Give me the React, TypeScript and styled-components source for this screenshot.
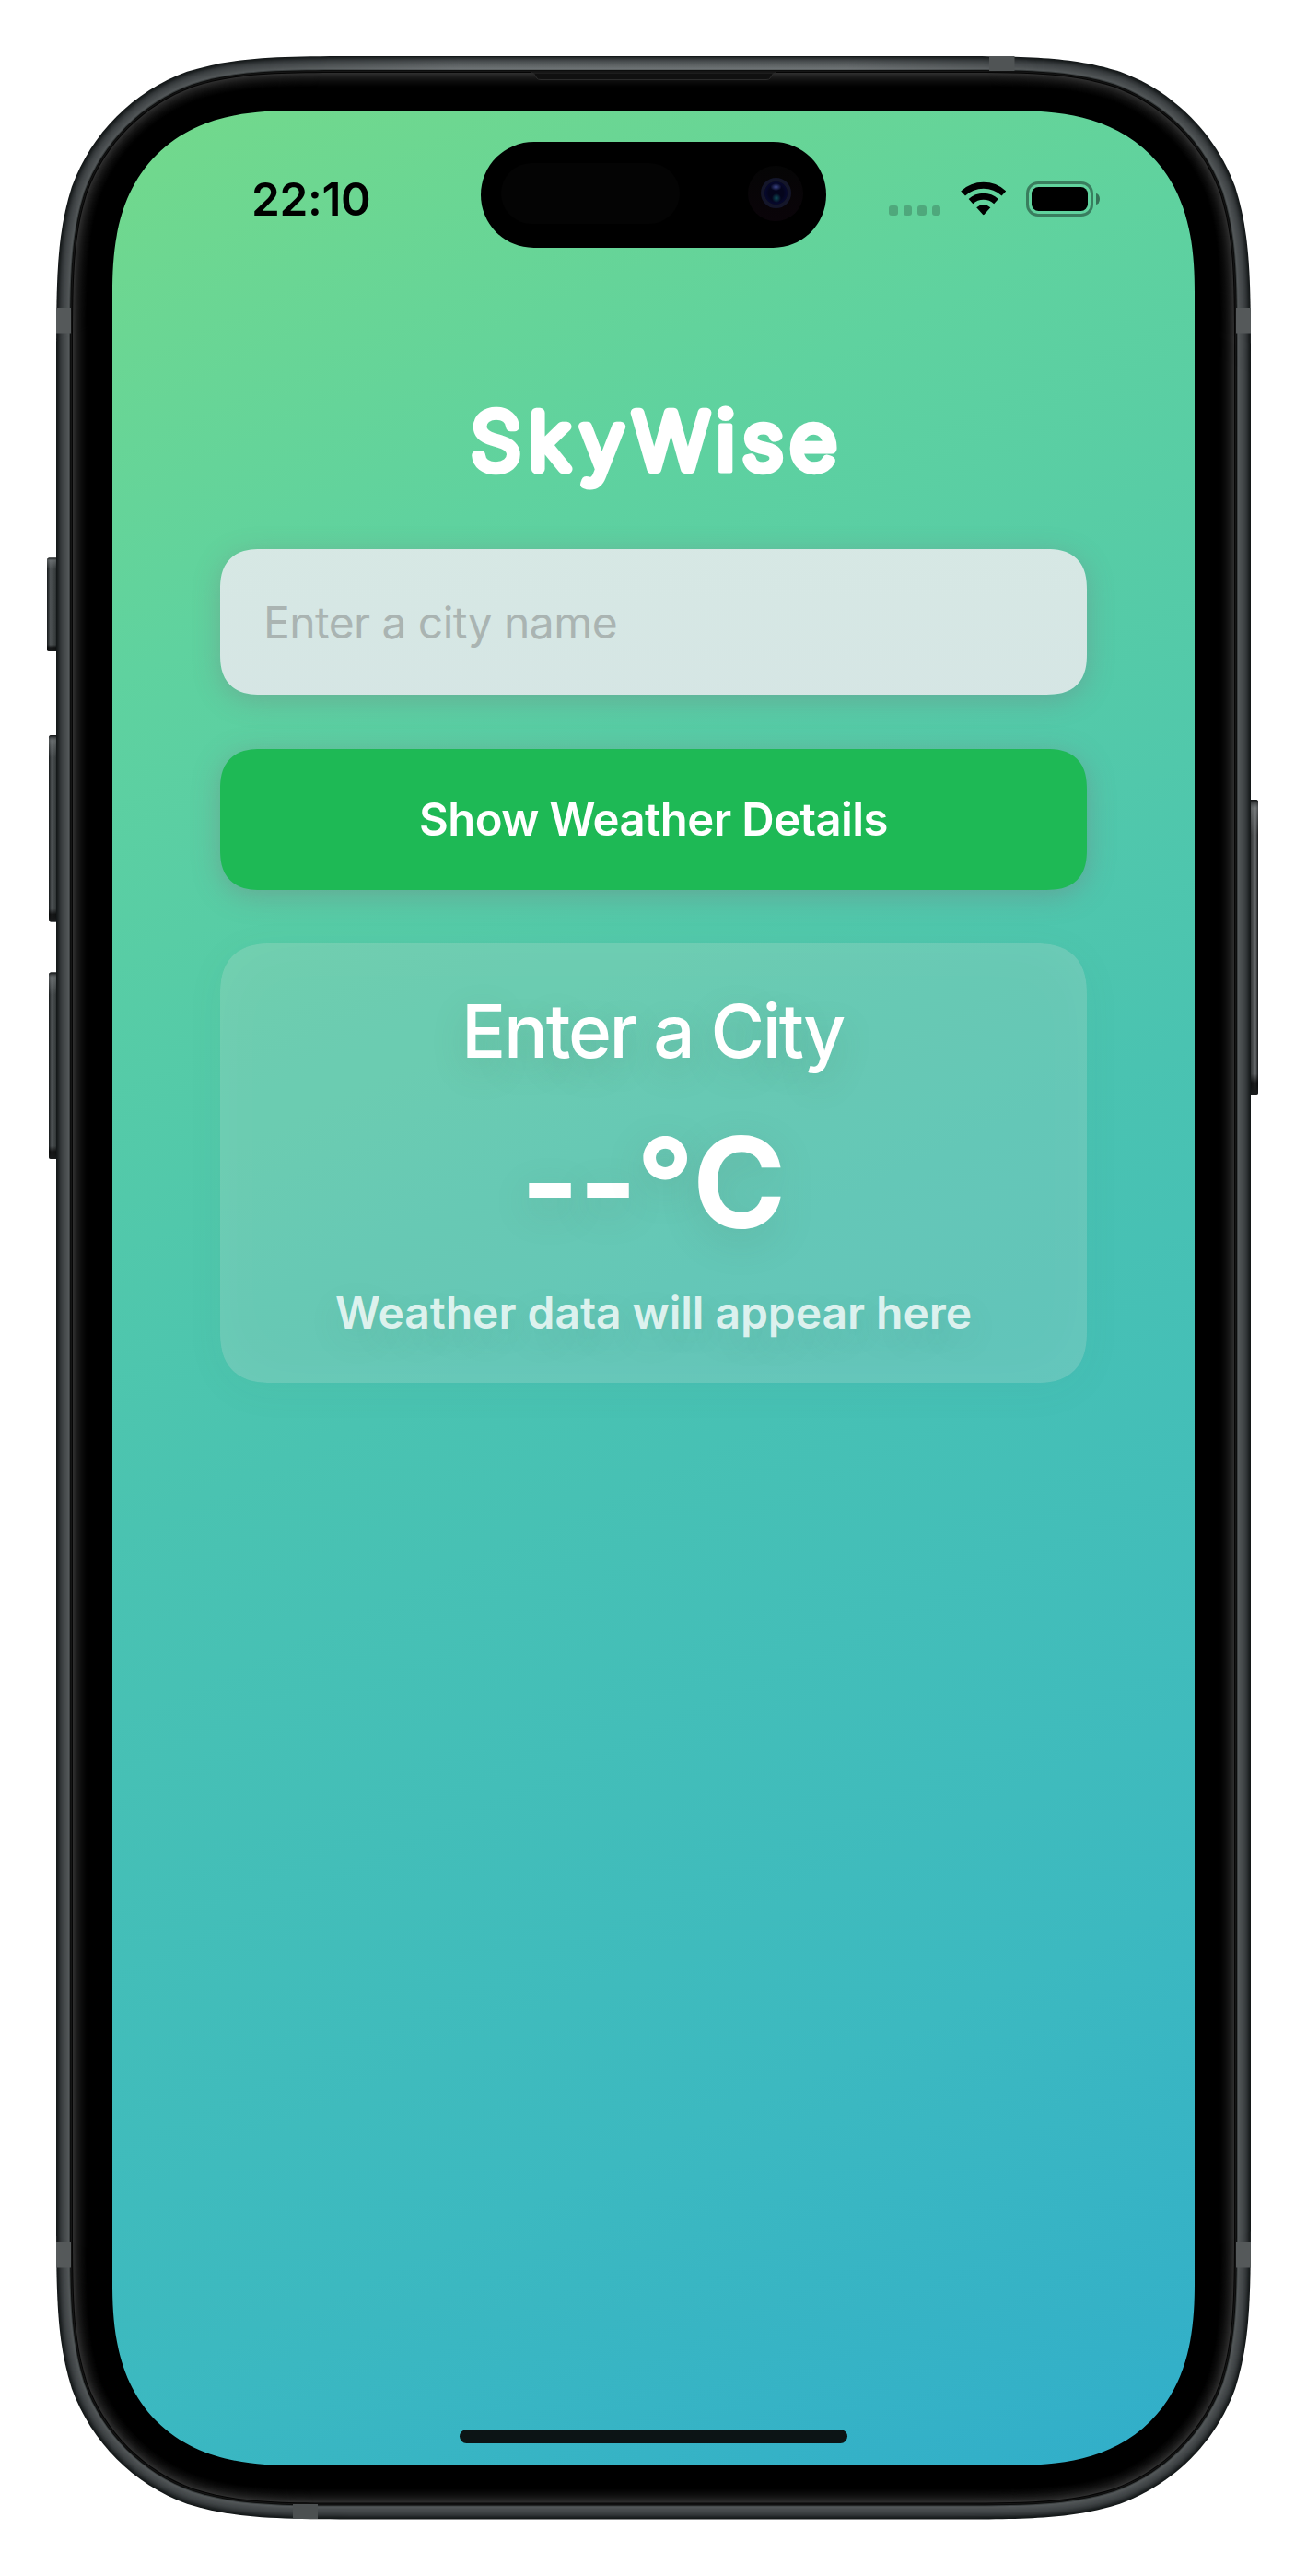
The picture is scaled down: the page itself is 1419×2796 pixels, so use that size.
import React from "react";
import styled, { createGlobalStyle } from "styled-components";

const GlobalStyle = createGlobalStyle`
  *, *::before, *::after { box-sizing: border-box; }
  body { margin: 0; background: #ffffff; }
`;

const font = `Inter, "Liberation Sans", sans-serif`;

/* Hardware geometry, in the coordinates of the phone's own box */
const PHONE_W = 1297;
const PHONE_H = 2673.5;
const CORNER = 225;

/* Continuous-curvature rounded rectangle, inset from the phone's outline */
function outline(inset: number) {
  const r = CORNER - inset;
  const l = inset;
  const t = inset;
  const rt = PHONE_W - inset;
  const b = PHONE_H - inset;
  const k = [1.528665, 1.08849296, 0.86840694, 0.63149379, 0.07491139, 0.37282383, 0.16905956].map((n) => n * r);
  const [e, c1, c2, p, q, m, n] = k;
  return [
    `M${l + e} ${t}H${rt - e}`,
    `C${rt - c1} ${t} ${rt - c2} ${t} ${rt - p} ${t + q}`,
    `C${rt - m} ${t + n} ${rt - n} ${t + m} ${rt - q} ${t + p}`,
    `C${rt} ${t + c2} ${rt} ${t + c1} ${rt} ${t + e}V${b - e}`,
    `C${rt} ${b - c1} ${rt} ${b - c2} ${rt - q} ${b - p}`,
    `C${rt - n} ${b - m} ${rt - m} ${b - n} ${rt - p} ${b - q}`,
    `C${rt - c2} ${b} ${rt - c1} ${b} ${rt - e} ${b}H${l + e}`,
    `C${l + c1} ${b} ${l + c2} ${b} ${l + p} ${b - q}`,
    `C${l + m} ${b - n} ${l + n} ${b - m} ${l + q} ${b - p}`,
    `C${l} ${b - c2} ${l} ${b - c1} ${l} ${b - e}V${t + e}`,
    `C${l} ${t + c1} ${l} ${t + c2} ${l + q} ${t + p}`,
    `C${l + n} ${t + m} ${l + m} ${t + n} ${l + p} ${t + q}`,
    `C${l + c2} ${t} ${l + c1} ${t} ${l + e} ${t}Z`,
  ].join("");
}

/* One colour per pixel, from the outer edge of the rail inwards */
const rail = [
  "#141819", "#1a1e1f", "#212526", "#292d2f", "#303436", "#363a3c", "#3b3f41", "#3f4445",
  "#43474a", "#464a4c", "#494d4f", "#4c5152", "#505456", "#53585a", "#3c4041", "#0c0d0d",
  "#151515", "#050505", "#2e2e2e", "#292929", "#242424", "#202020", "#1c1c1c", "#181818",
  "#151515", "#121212", "#0f0f0f", "#0c0c0c", "#0a0a0a", "#080808", "#060606", "#040404",
  "#020202", "#010101", "#000000",
];

const leftKeys = [
  { y: 544.5, height: 101.5, x: -10 },
  { y: 737, height: 202.5, x: -8 },
  { y: 994.5, height: 202.5, x: -8 },
];

const Page = styled.main`
  width: 1419px;
  height: 2796px;
  padding: 61px;
  overflow: hidden;
`;

const Phone = styled.div`
  position: relative;
  width: ${PHONE_W}px;
  height: ${PHONE_H}px;
  padding: 59px 61px;
`;

const Hardware = styled.svg`
  position: absolute;
  inset: 0;
  overflow: visible;
`;

const Screen = styled.section`
  position: relative;
  display: flex;
  flex-direction: column;
  width: 1175px;
  height: 2556px;
  border-radius: 198px;
  corner-shape: superellipse(1.32);
  overflow: hidden;
  font-family: ${font};
  background: linear-gradient(155.3deg, #73d98b 0%, #5fd29f 20%, #4ac3b1 50%, #3cb9c0 80%, #31aeca 100%);
`;

const StatusBar = styled.header`
  display: grid;
  grid-template-columns: 400px 375px 400px;
  align-items: center;
  padding-top: 34px;
  height: 149px;
`;

const Time = styled.time`
  padding: 7px 0 0 151px;
  font-size: 49.5px;
  line-height: 60px;
  font-weight: 600;
  letter-spacing: -0.35px;
  color: #000;
`;

const Island = styled.div`
  display: flex;
  align-items: center;
  justify-content: space-between;
  width: 375px;
  height: 115px;
  margin-bottom: 1px;
  padding: 0 25px 4px 22px;
  border-radius: 57.5px;
  background: #000;
`;

const Sensor = styled.div`
  width: 194px;
  height: 66px;
  border-radius: 33px;
  background: #040404;
`;

const Camera = styled.div`
  display: grid;
  place-items: center;
  width: 60px;
  height: 60px;
  border-radius: 50%;
  background: linear-gradient(#050505, #0a0409);
`;

const Lens = styled.div`
  width: 33px;
  height: 33px;
  border-radius: 50%;
  border: 4.5px solid #14162a;
  background:
    radial-gradient(ellipse 6px 4px at 50% 24%, #3d478c, transparent),
    radial-gradient(circle 5px at 52% 72%, #0e4c58, transparent),
    radial-gradient(circle, #04051c 45%, #0a0d46 100%);
  background-clip: padding-box;
`;

const Indicators = styled.div`
  display: flex;
  align-items: center;
  height: 45px;
  padding-top: 7px;
  margin-left: 68px;
`;

const Signal = styled.div`
  display: flex;
  align-self: flex-end;
  gap: 6px;
  margin: 0 21.5px 1px 0;
`;

const Dot = styled.span`
  width: 9.6px;
  height: 10.3px;
  border-radius: 3px;
  background: rgba(0, 0, 0, 0.2);
`;

const BatteryShell = styled.div`
  width: 73px;
  height: 38px;
  margin-left: 21.5px;
  padding: 3px;
  border: 3px solid rgba(0, 0, 0, 0.4);
  border-radius: 13px;
`;

const BatteryLevel = styled.div`
  height: 100%;
  border-radius: 7.5px;
  background: #000;
`;

const BatteryTip = styled.div`
  width: 4px;
  height: 12px;
  margin-left: 3px;
  border-radius: 0 4px 4px 0 / 0 6px 6px 0;
  background: rgba(0, 0, 0, 0.45);
`;

const Content = styled.div`
  display: flex;
  flex-direction: column;
  padding: 147px 117px 0;
`;

const Title = styled.h1`
  margin: 0;
  height: 180px;
`;

/* Thin letters with a heavy round-joined stroke give the rounded lettering */
const Wordmark = styled.svg`
  display: block;
  font-family: ${font};
  font-size: 84px;
  font-weight: 200;
  fill: #fff;
  stroke: #fff;
  stroke-width: 10.4px;
  stroke-linejoin: round;
`;

const OpenLetter = styled.tspan`
  font-size: 90px;
  font-weight: 470;
  stroke-width: 5px;
`;

const CityInput = styled.input`
  height: 158px;
  padding: 1px 46px 0 47px;
  border: 0;
  border-radius: 44px;
  corner-shape: superellipse(1.32);
  background: linear-gradient(rgba(216, 232, 229, 0.99), rgba(215, 230, 229, 0.99));
  box-shadow: 0 6px 30px rgba(128, 100, 116, 0.31);
  font: 400 48px ${font};
  letter-spacing: -0.58px;
  outline: none;

  &::placeholder {
    color: #aab4b2;
    opacity: 1;
  }
`;

const Submit = styled.button`
  height: 153px;
  margin-top: 58.5px;
  padding: 1px 0 0;
  border: 0;
  border-radius: 44px;
  corner-shape: superellipse(1.32);
  background: #1eb955;
  box-shadow: 0 6px 30px rgba(128, 100, 116, 0.35);
  color: #fff;
  font: 600 49px ${font};
  letter-spacing: -0.57px;
`;

const Card = styled.section`
  display: flex;
  flex-direction: column;
  align-items: center;
  height: 477px;
  margin-top: 58.5px;
  padding-top: 47px;
  border-radius: 56px;
  corner-shape: superellipse(1.32);
  background: rgba(196, 214, 206, 0.22);
  box-shadow: inset 0 0 70px rgba(255, 255, 255, 0.05), 0 8px 44px rgba(60, 110, 90, 0.05);
  color: #fff;
`;

const City = styled.h2`
  margin: 0;
  padding-right: 2px;
  font-size: 80px;
  line-height: 96px;
  font-weight: 500;
  letter-spacing: -2.3px;
  text-shadow: 0 12px 36px rgba(80, 120, 90, 0.24);
`;

const Temperature = styled.p`
  margin: 34px 0 0;
  font-size: 137px;
  line-height: 164px;
  font-weight: 700;
  text-shadow: 0 12px 40px rgba(80, 120, 100, 0.22);
`;

const Dashes = styled.span`
  letter-spacing: -1.2px;
`;

const Unit = styled.span`
  letter-spacing: 0.6px;
`;

const Description = styled.p`
  margin: 31px 0 0;
  font-size: 48px;
  line-height: 58px;
  font-weight: 560;
  letter-spacing: -0.05px;
  color: rgba(255, 255, 255, 0.8);
  text-shadow: 0 12px 36px rgba(80, 120, 100, 0.14);
`;

const HomeIndicator = styled.div`
  width: 421px;
  height: 15px;
  margin: auto auto 24px;
  border-radius: 8px;
  background: #0c1415;
`;

function DeviceHardware() {
  return (
    <Hardware width={PHONE_W} height={PHONE_H} viewBox={`0 0 ${PHONE_W} ${PHONE_H}`} aria-hidden="true">
      <defs>
        <linearGradient id="keyLeft" x1="0" x2="1" y1="0" y2="0">
          <stop offset="0" stopColor="#15191a" />
          <stop offset="0.3" stopColor="#4d5254" />
          <stop offset="0.7" stopColor="#3a3f40" />
          <stop offset="1" stopColor="#1a1d1e" />
        </linearGradient>
        <linearGradient id="keyRight" x1="1" x2="0" y1="0" y2="0">
          <stop offset="0" stopColor="#131516" />
          <stop offset="0.3" stopColor="#66696b" />
          <stop offset="0.7" stopColor="#3e4142" />
          <stop offset="1" stopColor="#202223" />
        </linearGradient>
        <linearGradient id="keyEnds" x1="0" x2="0" y1="0" y2="1">
          <stop offset="0" stopColor="#0d0f10" />
          <stop offset="0.03" stopColor="#8b9092" stopOpacity="0.45" />
          <stop offset="0.12" stopColor="#8b9092" stopOpacity="0" />
          <stop offset="0.93" stopColor="#000" stopOpacity="0" />
          <stop offset="0.96" stopColor="#000" stopOpacity="0.7" />
          <stop offset="1" stopColor="#1a1c1d" />
        </linearGradient>
        <linearGradient id="topSheen" x1="0" x2="0" y1="0" y2="1">
          <stop offset="0" stopColor="#aab0b2" stopOpacity="0.08" />
          <stop offset="1" stopColor="#aab0b2" stopOpacity="0.32" />
        </linearGradient>
        <linearGradient id="sheenFade" x1="0" x2="1" y1="0" y2="0">
          <stop offset="0" stopColor="#fff" stopOpacity="0" />
          <stop offset="0.25" stopColor="#fff" />
          <stop offset="0.75" stopColor="#fff" />
          <stop offset="1" stopColor="#fff" stopOpacity="0" />
        </linearGradient>
        <mask id="sheenMask">
          <rect x="230" y="0" width="837" height="20" fill="url(#sheenFade)" />
        </mask>
      </defs>
      {leftKeys.map(({ x, y, height }) => (
        <g key={y}>
          <rect x={x} y={y} width={2 - x} height={height} rx="2.5" fill="url(#keyLeft)" />
          <rect x={x} y={y} width={2 - x} height={height} rx="2.5" fill="url(#keyEnds)" />
        </g>
      ))}
      <rect x="1295" y="807" width="10" height="320" rx="2.5" fill="url(#keyRight)" />
      <rect x="1295" y="807" width="10" height="320" rx="2.5" fill="url(#keyEnds)" />
      {rail.map((color, inset) => (
        <path key={inset} d={outline(inset)} fill={color} />
      ))}
      <rect x="230" y="1" width="837" height="14" fill="url(#topSheen)" mask="url(#sheenMask)" />
      <g fill="#55595a">
        <rect x="0" y="273" width="16" height="27.5" />
        <rect x="1281" y="273" width="16" height="27.5" />
        <rect x="0" y="2373" width="16" height="27.5" />
        <rect x="1281" y="2373" width="16" height="27.5" />
        <rect x="1013" y="0" width="27.5" height="16" fill="#505455" />
        <rect x="257" y="2657" width="27" height="16" fill="#4c5051" />
      </g>
      <path
        d="M516 18H781Q778 18 777 21L775 24Q774 25.5 771 25.5H526Q523 25.5 522 24L520 21Q519 18 516 18Z"
        fill="#101010"
        stroke="#2b2b2b"
        strokeWidth="1"
      />
    </Hardware>
  );
}

function WifiIcon() {
  return (
    <svg width="49.5" height="37" viewBox="0 0 49.5 37" fill="none" aria-hidden="true">
      <path d="M2.6 13A32.5 32.5 0 0 1 46.9 13" stroke="#000" strokeWidth="7" />
      <path d="M11 21.6A20.5 20.5 0 0 1 38.5 21.6" stroke="#000" strokeWidth="7" />
      <path d="M17.2 28.2A11 11 0 0 1 32.3 28.2L25.6 35.8Q24.8 36.6 24 35.8Z" fill="#000" />
    </svg>
  );
}

export default function App() {
  return (
    <>
      <GlobalStyle />
      <Page>
        <Phone>
          <DeviceHardware />
          <Screen>
            <StatusBar>
              <Time>22:10</Time>
              <Island>
                <Sensor />
                <Camera>
                  <Lens />
                </Camera>
              </Island>
              <Indicators>
                <Signal>
                  <Dot />
                  <Dot />
                  <Dot />
                  <Dot />
                </Signal>
                <WifiIcon />
                <BatteryShell>
                  <BatteryLevel />
                </BatteryShell>
                <BatteryTip />
              </Indicators>
            </StatusBar>
            <Content>
              <Title>
                <Wordmark width="941" height="140" viewBox="0 0 941 140">
                  <text y="92.8" x="264 325.2 378.6 434.6" transform="scale(1.032 1)">
                    SkyW<OpenLetter x="520.4" y="95.5">i</OpenLetter><tspan x="549.6 599.8" y="92.8">se</tspan>
                  </text>
                </Wordmark>
              </Title>
              <CityInput placeholder="Enter a city name" aria-label="City name" />
              <Submit type="button">Show Weather Details</Submit>
              <Card>
                <City>Enter a City</City>
                <Temperature>
                  <Dashes>--</Dashes>
                  <Unit>°C</Unit>
                </Temperature>
                <Description>Weather data will appear here</Description>
              </Card>
            </Content>
            <HomeIndicator />
          </Screen>
        </Phone>
      </Page>
    </>
  );
}
